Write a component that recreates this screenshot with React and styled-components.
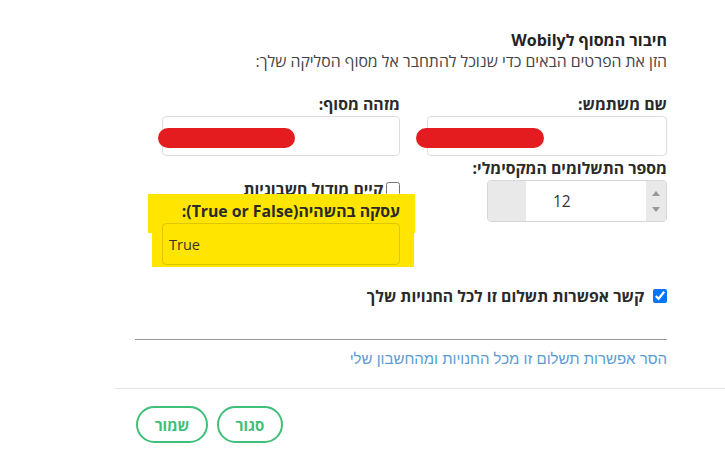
import React from "react";
import styled, { createGlobalStyle } from "styled-components";

const Global = createGlobalStyle`
  html, body { margin: 0; padding: 0; background: #fff; }
  body { font-family: "Open Sans", "DejaVu Sans", sans-serif; color: #333; }
  * { box-sizing: border-box; }
`;

const Page = styled.div`
  direction: rtl;
  width: 725px;
  height: 458px;
  overflow: hidden;
`;

const Content = styled.div`
  margin-left: 135px;
  margin-right: 58px;
  padding-top: 30px;
`;

const Title = styled.h2`
  margin: 0;
  font-size: 16px;
  line-height: 20px;
  font-weight: 700;
  color: #222;
`;

const Subtitle = styled.p`
  margin: 0;
  font-size: 15.8px;
  line-height: 22px;
  color: #444;
`;

const Grid = styled.div`
  display: grid;
  grid-template-columns: 240px 238px;
  column-gap: 27px;
  margin-top: 21px;
`;

const Column = styled.div`
  display: flex;
  flex-direction: column;
`;

const Field = styled.div`
  position: relative;
  display: flex;
  flex-direction: column;
  margin-top: ${(p) => p.$mt || 0}px;
`;

const Label = styled.label`
  font-size: 15.8px;
  font-weight: 700;
  line-height: 22px;
  color: #2a2a2a;
  margin-bottom: 1px;
`;

const InputBox = styled.div`
  position: relative;
  height: ${(p) => p.$h || 40}px;
  border: 1px solid rgba(0, 0, 0, 0.13);
  border-radius: 4px;
  background: transparent;
  display: flex;
  align-items: center;
  direction: ltr;
  padding: 0 6px;
  font-size: 14.5px;
  color: #333;
`;

const Redact = styled.span`
  position: absolute;
  top: 11px;
  left: ${(p) => p.$left}px;
  width: ${(p) => p.$w}px;
  height: 20px;
  border-radius: 10px;
  background: #e51c1f;
`;

const Spinner = styled.div`
  display: flex;
  align-self: flex-start;
  width: 180px;
  height: 42px;
  border: 1px solid #d6d6d6;
  border-radius: 4px;
  overflow: hidden;
  direction: ltr;
  background: #fff;
`;

const SpinPad = styled.div`
  width: 38px;
  background: #e9e9e9;
`;

const SpinValue = styled.div`
  flex: 1;
  display: flex;
  align-items: center;
  padding-left: 27px;
  font-size: 15.5px;
  color: #333;
`;

const SpinButtons = styled.div`
  width: 20px;
  background: #e9e9e9;
  display: flex;
  flex-direction: column;
  justify-content: space-around;
  align-items: center;
  padding: 4px 0;
`;

const Arrow = styled.span`
  width: 0;
  height: 0;
  border-left: 4px solid transparent;
  border-right: 4px solid transparent;
  ${(p) =>
    p.$up
      ? "border-bottom: 5px solid #999;"
      : "border-top: 5px solid #999;"}
`;

const CheckRow = styled.label`
  display: flex;
  align-items: center;
  gap: ${(p) => p.$gap || 3}px;
  font-size: 15.8px;
  font-weight: 700;
  line-height: 22px;
  color: #2a2a2a;
  margin-top: ${(p) => p.$mt || 0}px;
`;

const Check = styled.input`
  margin: 0;
  width: 14px;
  height: 14px;
  accent-color: #0075ff;
`;

const Highlight = styled.div`
  position: relative;
  isolation: isolate;
  &::before {
    content: "";
    position: absolute;
    z-index: -1;
    top: -6px;
    left: -14px;
    width: 267px;
    height: 39px;
    background: #ffe500;
  }
  &::after {
    content: "";
    position: absolute;
    z-index: -1;
    top: 32px;
    left: -10px;
    width: 262px;
    height: 35px;
    background: #ffe500;
  }
`;

const Rule = styled.hr`
  margin: 32px 0 0;
  border: 0;
  border-top: 1px solid #999;
`;

const Link = styled.a`
  display: block;
  margin-top: 9px;
  font-family: "Liberation Sans", Arial, sans-serif;
  font-size: 15px;
  line-height: 20px;
  color: #5b9bd5;
  text-decoration: none;
  cursor: pointer;
`;

const Footer = styled.div`
  margin-left: 115px;
  margin-top: 19px;
  border-top: 1px solid #e5e5e5;
  padding-top: 17px;
  padding-left: 21px;
  display: flex;
  justify-content: flex-end;
  gap: 9px;
`;

const Button = styled.button`
  height: 37px;
  min-width: ${(p) => p.$w}px;
  border: 2px solid #3fbf78;
  border-radius: 19px;
  background: #fff;
  color: #3fbf78;
  font-family: "Open Sans", "DejaVu Sans", sans-serif;
  font-size: 15px;
  font-weight: 700;
  padding: 0 14px;
  cursor: pointer;
`;

export default function App() {
  return (
    <Page>
      <Global />
      <Content>
        <Title>חיבור המסוף לWobily</Title>
        <Subtitle>הזן את הפרטים הבאים כדי שנוכל להתחבר אל מסוף הסליקה שלך:</Subtitle>
        <Grid>
          <Column>
            <Field>
              <Label>שם משתמש:</Label>
              <InputBox>
                <Redact $left={-12} $w={128} />
              </InputBox>
            </Field>
            <Field $mt={1}>
              <Label>מספר התשלומים המקסימלי:</Label>
              <Spinner>
                <SpinPad />
                <SpinValue>12</SpinValue>
                <SpinButtons>
                  <Arrow $up />
                  <Arrow />
                </SpinButtons>
              </Spinner>
            </Field>
          </Column>
          <Column>
            <Field>
              <Label>מזהה מסוף:</Label>
              <InputBox>
                <Redact $left={-5} $w={137} />
              </InputBox>
            </Field>
            <CheckRow $mt={22}>
              <Check type="checkbox" />
              קיים מודול חשבוניות
            </CheckRow>
            <Highlight>
              <Field>
                <Label>עסקה בהשהיה(True or False):</Label>
                <InputBox $h={42}>True</InputBox>
              </Field>
            </Highlight>
          </Column>
        </Grid>
        <CheckRow $mt={20} $gap={9}>
          <Check type="checkbox" defaultChecked />
          קשר אפשרות תשלום זו לכל החנויות שלך
        </CheckRow>
        <Rule />
        <Link>הסר אפשרות תשלום זו מכל החנויות ומהחשבון שלי</Link>
      </Content>
      <Footer>
        <Button $w={66}>סגור</Button>
        <Button $w={72}>שמור</Button>
      </Footer>
    </Page>
  );
}
